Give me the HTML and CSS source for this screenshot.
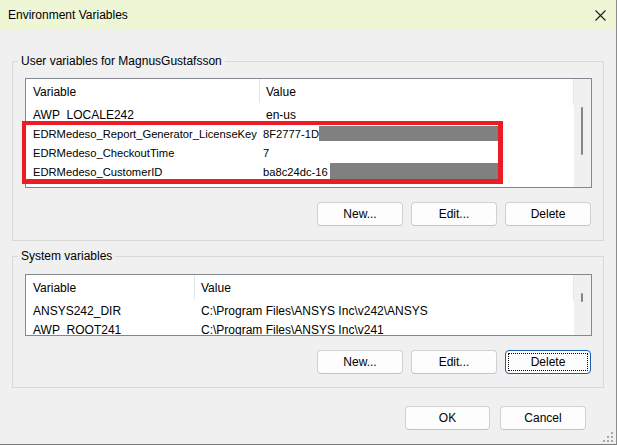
FILE: index.html
```html
<!DOCTYPE html>
<html lang="en">
<head>
<meta charset="utf-8">
<title>Environment Variables</title>
<link rel="stylesheet" href="styles.css">
</head>
<body>
<div class="window">
  <div class="titlebar">
    <span class="title">Environment Variables</span>
    <svg class="close" width="11" height="11" viewBox="0 0 11 11" aria-hidden="true">
      <path d="M0.5 0.5 L10.5 10.5 M10.5 0.5 L0.5 10.5" stroke="#1a1a1a" stroke-width="1.1" fill="none"/>
    </svg>
  </div>
  <div class="content">
    <fieldset class="group group-user">
      <legend>User variables for MagnusGustafsson</legend>
      <div class="list list-user">
        <div class="list-main">
          <div class="list-head">
            <div class="col col-1">Variable</div>
            <div class="col col-2">Value</div>
          </div>
          <div class="row"><div class="col col-1">AWP_LOCALE242</div><div class="col col-2">en-us</div></div>
          <div class="row row-hl"><div class="col col-1">EDRMedeso_Report_Generator_LicenseKey</div><div class="col col-2">8F2777-1D</div></div>
          <div class="row row-hl"><div class="col col-1">EDRMedeso_CheckoutTime</div><div class="col col-2">7</div></div>
          <div class="row row-hl"><div class="col col-1">EDRMedeso_CustomerID</div><div class="col col-2">ba8c24dc-16</div></div>
        </div>
        <div class="scrollbar"><div class="thumb thumb-user"></div></div>
        <div class="highlight"></div>
        <div class="redact redact-1"></div>
        <div class="redact redact-2"></div>
      </div>
      <div class="buttons">
        <button class="btn">New...</button>
        <button class="btn">Edit...</button>
        <button class="btn">Delete</button>
      </div>
    </fieldset>

    <fieldset class="group group-sys">
      <legend>System variables</legend>
      <div class="list list-sys">
        <div class="list-main">
          <div class="list-head">
            <div class="col col-1">Variable</div>
            <div class="col col-2">Value</div>
          </div>
          <div class="row"><div class="col col-1">ANSYS242_DIR</div><div class="col col-2">C:\Program Files\ANSYS Inc\v242\ANSYS</div></div>
          <div class="row"><div class="col col-1">AWP_ROOT241</div><div class="col col-2">C:\Program Files\ANSYS Inc\v241</div></div>
        </div>
        <div class="scrollbar"><div class="thumb thumb-sys"></div></div>
      </div>
      <div class="buttons">
        <button class="btn">New...</button>
        <button class="btn">Edit...</button>
        <button class="btn btn-focus">Delete</button>
      </div>
    </fieldset>

    <div class="dialog-buttons">
      <button class="btn btn-ok">OK</button>
      <button class="btn btn-cancel">Cancel</button>
    </div>
  </div>
  <svg class="grip" width="11" height="11" viewBox="0 0 11 11" aria-hidden="true">
    <rect x="8" y="0" width="2" height="2" fill="#a8a8a8"/>
    <rect x="4" y="4" width="2" height="2" fill="#a8a8a8"/>
    <rect x="8" y="4" width="2" height="2" fill="#a8a8a8"/>
    <rect x="0" y="8" width="2" height="2" fill="#a8a8a8"/>
    <rect x="4" y="8" width="2" height="2" fill="#a8a8a8"/>
    <rect x="8" y="8" width="2" height="2" fill="#a8a8a8"/>
  </svg>
</div>
</body>
</html>
```

FILE: styles.css
```css
* { box-sizing: border-box; }

html, body {
  margin: 0;
  padding: 0;
}

body {
  width: 617px;
  height: 445px;
  overflow: hidden;
  background: #f0f0f0;
  font-family: "Liberation Sans", Arial, sans-serif;
  font-size: 12px;
  color: #000;
}

.window {
  position: relative;
  width: 617px;
  height: 445px;
  background: #f0f0f0;
  border-right: 1px solid #8c8c8c;
  border-bottom: 1px solid #7c7c7c;
  display: flex;
  flex-direction: column;
}

.titlebar {
  height: 30px;
  flex: none;
  background: #eff6d5;
  display: flex;
  align-items: center;
  justify-content: space-between;
  padding: 0 10px 0 8px;
}

.title {
  font-size: 12px;
  line-height: 16px;
}

.close { display: block; }

.content {
  padding: 24px 0 0 12px;
  display: flex;
  flex-direction: column;
}

.group {
  margin: 0;
  width: 592px;
  min-width: 0;
  border: 1px solid #d9d9d9;
  padding: 9px 11px 14px 12px;
}

.group-sys {
  margin-top: 8px;
  padding-top: 10px;
  padding-bottom: 13px;
}

.group legend {
  padding: 0 3px;
  margin-left: -7px;
  line-height: 15px;
  font-size: 12px;
}

.list {
  position: relative;
  border: 1px solid #828790;
  background: #fff;
  display: flex;
}

.list-user { height: 110px; }
.list-sys { height: 62px; }

.list-main {
  flex: 1;
  min-width: 0;
  overflow: hidden;
}

.list-head {
  display: flex;
  height: 26px;
  padding-bottom: 2px;
  border-right: 1px solid #e8e8e8;
}

.list-head .col {
  height: 24px;
  line-height: 26px;
}

.list-head .col-1 { border-right: 1px solid #e5e5e5; }

.row {
  display: flex;
  height: 19px;
  line-height: 21px;
}

.col {
  white-space: nowrap;
  overflow: hidden;
}

.col-1 {
  flex: none;
  padding-left: 7px;
}

.col-2 {
  flex: 1;
  padding-left: 6px;
}

.list-user .col-1 { width: 234px; }
.list-sys .col-1 { width: 169px; }

.row-hl .col { font-size: 11.2px; }
.row-hl .col-2 { padding-left: 3px; }

.scrollbar {
  flex: none;
  width: 17px;
  background: #f0f0f0;
  display: flex;
  flex-direction: column;
  align-items: flex-start;
}

.thumb {
  width: 2px;
  margin-left: 7px;
  background: #858585;
  border-radius: 1px;
}

.thumb-user { margin-top: 28px; height: 48px; }
.thumb-sys { margin-top: 18px; height: 9px; }

/* annotation overlays */
.highlight {
  position: absolute;
  left: -4px;
  top: 42px;
  width: 481px;
  height: 63px;
  border-style: solid;
  border-color: #ed1c24;
  border-width: 4px 5px 5px 4px;
}

.redact {
  position: absolute;
  background: #808080;
}

.redact-1 { left: 293px; top: 47px; width: 179px; height: 15px; }
.redact-2 { left: 304px; top: 84px; width: 168px; height: 16px; }

.buttons {
  display: flex;
  justify-content: flex-end;
  gap: 8px;
  margin-top: 14px;
  margin-right: 1px;
}

.btn {
  width: 86px;
  height: 24px;
  padding: 0;
  margin: 0;
  font-family: inherit;
  font-size: 12px;
  color: #000;
  background: #fdfdfd;
  border: 1px solid #d0d0d0;
  border-bottom-color: #c4c4c4;
  border-radius: 4px;
}

.btn-focus {
  border-color: #1a5fb4;
  outline: 1px dotted #000;
  outline-offset: -4px;
}

.dialog-buttons {
  display: flex;
  justify-content: flex-end;
  gap: 10px;
  margin-top: 18px;
  padding-right: 30px;
}

.btn-ok { width: 85px; }

.grip {
  position: absolute;
  right: 2px;
  bottom: 1px;
}
```
